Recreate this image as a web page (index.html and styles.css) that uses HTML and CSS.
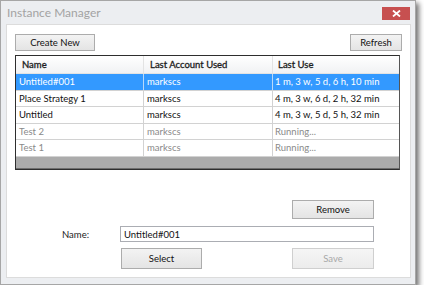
FILE: index.html
```html
<!DOCTYPE html>
<html>
<head>
<meta charset="utf-8">
<link rel="stylesheet" href="styles.css">
</head>
<body>
<div class="window">
  <div class="titlebar">
    <span class="title">Instance Manager</span>
    <span class="close"><svg width="9" height="7" viewBox="0 0 9 7"><path d="M1 0.5 L8 6.5 M8 0.5 L1 6.5" stroke="#fff" stroke-width="1.8"/></svg></span>
  </div>
  <div class="client">
    <div class="toolbar">
      <button class="btn create">Create New</button>
      <button class="btn refresh">Refresh</button>
    </div>
    <div class="table">
      <div class="row head">
        <div class="cell c1">Name</div>
        <div class="cell c2">Last Account Used</div>
        <div class="cell c3">Last Use</div>
      </div>
      <div class="row sel">
        <div class="cell c1">Untitled#001</div>
        <div class="cell c2">markscs</div>
        <div class="cell c3">1 m, 3 w, 5 d, 6 h, 10 min</div>
      </div>
      <div class="row">
        <div class="cell c1">Place Strategy 1</div>
        <div class="cell c2">markscs</div>
        <div class="cell c3">4 m, 3 w, 6 d, 2 h, 32 min</div>
      </div>
      <div class="row">
        <div class="cell c1">Untitled</div>
        <div class="cell c2">markscs</div>
        <div class="cell c3">4 m, 3 w, 5 d, 5 h, 32 min</div>
      </div>
      <div class="row run">
        <div class="cell c1">Test 2</div>
        <div class="cell c2">markscs</div>
        <div class="cell c3">Running...</div>
      </div>
      <div class="row run">
        <div class="cell c1">Test 1</div>
        <div class="cell c2">markscs</div>
        <div class="cell c3">Running...</div>
      </div>
      <div class="filler"></div>
    </div>
    <div class="form">
      <button class="btn remove">Remove</button>
      <label class="label">Name:</label>
      <div class="input">Untitled#001</div>
      <button class="btn select">Select</button>
      <button class="btn save" disabled>Save</button>
    </div>
  </div>
</div>
</body>
</html>
```

FILE: styles.css
```css
html, body {
  margin: 0;
  padding: 0;
  background: #ffffff;
}
body {
  font-family: "Lato", "Open Sans", sans-serif;
  font-size: 9.5px;
  color: #111;
}
.window {
  box-sizing: border-box;
  width: 416px;
  height: 285px;
  background: #eceef1;
  border: 1px solid #a6a6a6;
  box-shadow: 3px 3px 5px rgba(0,0,0,0.55);
  display: flex;
  flex-direction: column;
}
.titlebar {
  height: 23px;
  display: flex;
  align-items: center;
  padding-left: 6px;
}
.title {
  font-size: 12px;
  color: #a3a3a3;
}
.close {
  margin-left: auto;
  margin-right: 5px;
  margin-top: 1px;
  width: 28px;
  height: 13px;
  background: #c75050;
  display: flex;
  align-items: center;
  justify-content: center;
}
.client {
  flex: 1;
  margin: 0 4px 6px 5px;
  background: #fff;
  border: 1px solid #dcdcdc;
  padding: 9px 9px 0 8px;
  display: flex;
  flex-direction: column;
}
.btn {
  box-sizing: border-box;
  font-family: inherit;
  font-size: 9.5px;
  color: #111;
  border: 1px solid #acacac;
  background: linear-gradient(#f3f3f3, #e4e4e4);
  padding: 0;
  margin: 0;
}
.toolbar {
  display: flex;
  justify-content: space-between;
  height: 17px;
}
.create { width: 80px; height: 17px; }
.refresh { width: 52px; height: 17px; margin-right: -1px; }
.table {
  margin-top: 4px;
  width: 385px;
  box-sizing: border-box;
  border: 1px solid #2e2e2e;
  border-right-color: #555;
  height: 115px;
  display: flex;
  flex-direction: column;
}
.row {
  display: flex;
  height: 16.5px;
  box-sizing: border-box;
  border-bottom: 1px solid #d2d2d2;
}
.row .cell {
  box-sizing: border-box;
  border-right: 1px solid #d2d2d2;
  padding-left: 3px;
  display: flex;
  align-items: center;
  white-space: nowrap;
  overflow: hidden;
}
.c1 { width: 128px; }
.c2 { width: 129px; }
.c3 { flex: 1; border-right: none !important; padding-left: 2px !important; }
.head {
  height: 18px;
  background: linear-gradient(#ffffff, #f1f2f4);
  border-bottom: 1px solid #e3e3e3;
  color: #1c1c1c;
  -webkit-text-stroke: 0.3px #1c1c1c;
}
.head .cell { border-right-color: #e3e3e3; padding-left: 6px; }
.head .c3 { padding-left: 5px !important; }
.sel {
  background: #3399ff;
  color: #fff;
}
.sel .cell { border-right-color: #b9d9f9; }
.run { color: #8a8a8a; }
.filler {
  flex: 1;
  background: #ababab;
  border-bottom: 1px solid #6e6e6e;
}
.form {
  margin-top: 30px;
  display: grid;
  grid-template-columns: 105px 82px 90px 82px;
  grid-template-rows: 19px 16px 20px;
  row-gap: 7px;
}
.remove { grid-column: 4; grid-row: 1; }
.label {
  grid-column: 1;
  grid-row: 2;
  padding-left: 47px;
  display: flex;
  align-items: center;
  color: #222;
}
.input {
  grid-column: 2 / 5;
  grid-row: 2;
  box-sizing: border-box;
  border: 1px solid #abadb3;
  padding-left: 3px;
  display: flex;
  align-items: center;
}
.select { grid-column: 2; grid-row: 3; margin-left: 1px; margin-top: -1px; }
.save {
  grid-column: 4;
  grid-row: 3;
  margin-top: -1px;
  color: #a8a8a8;
  border-color: #cfcfcf;
  background: linear-gradient(#f5f5f5, #ececec);
}
```
